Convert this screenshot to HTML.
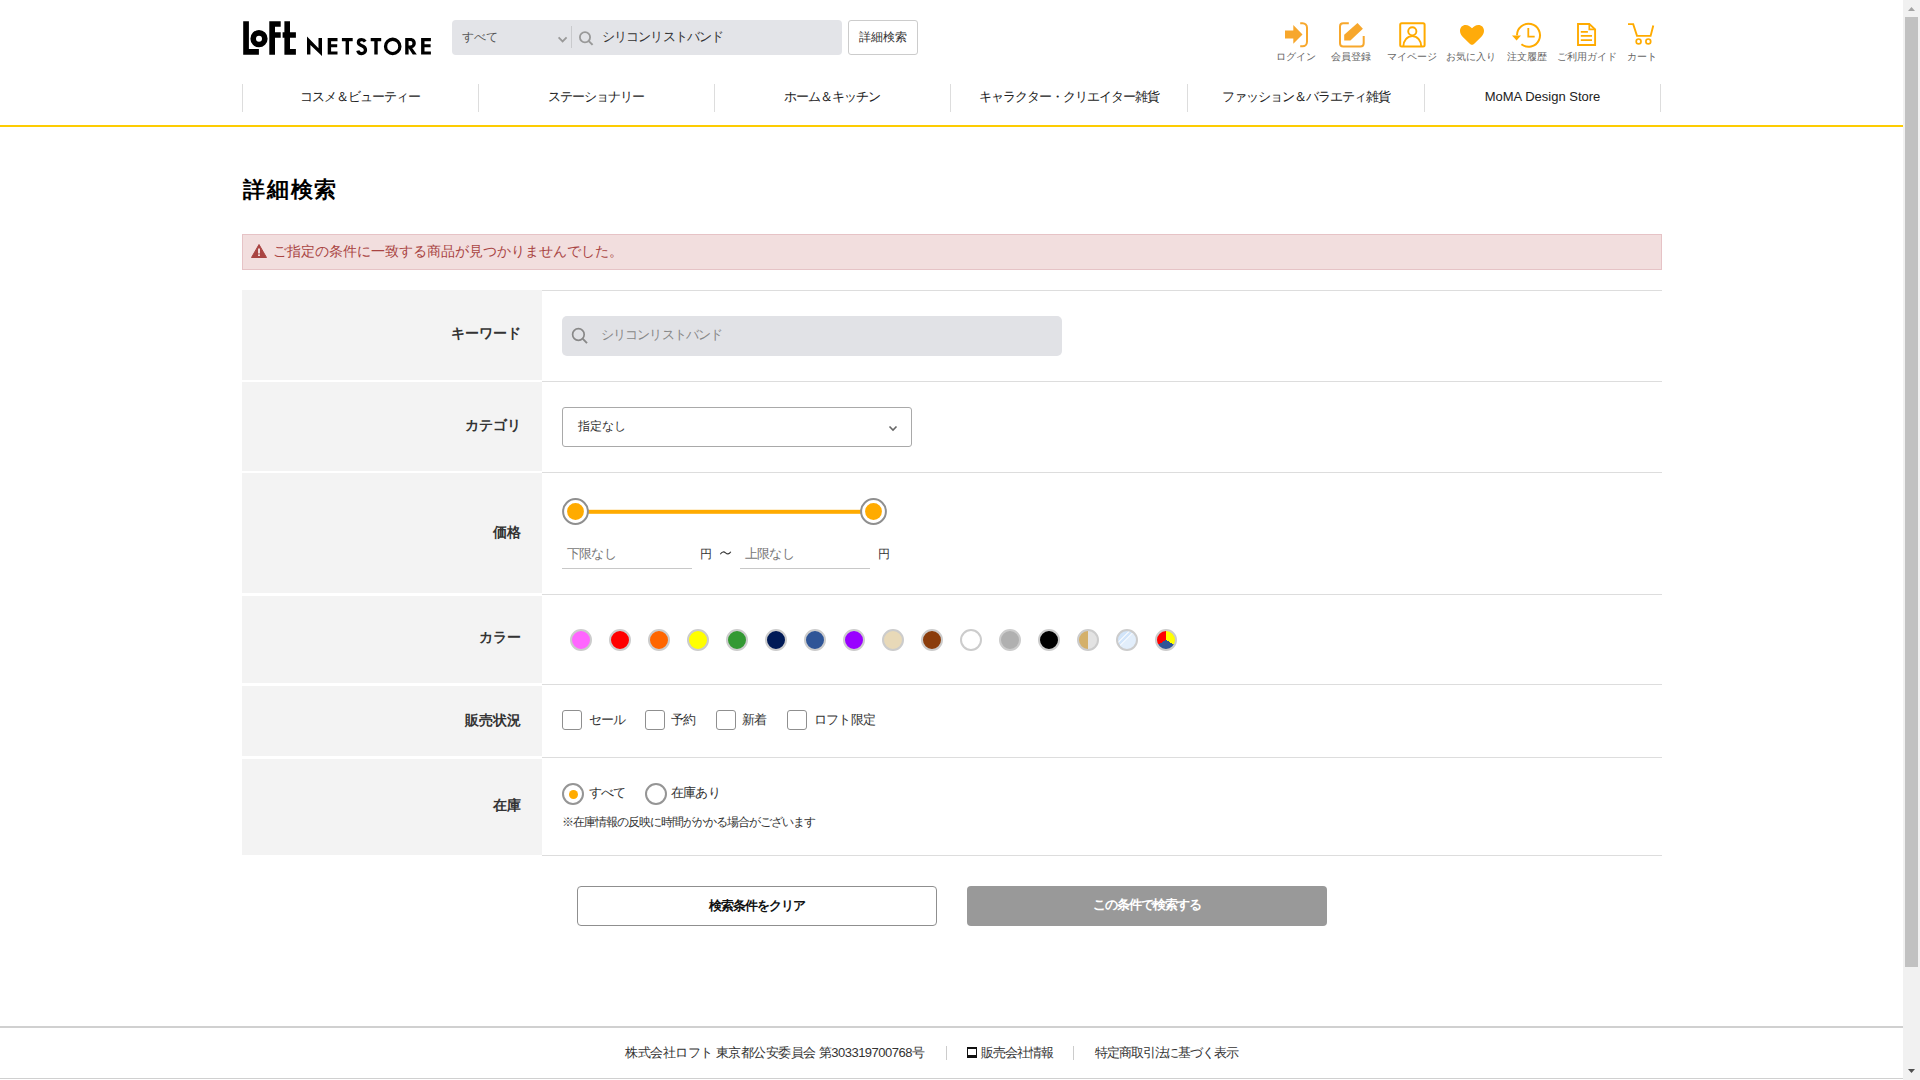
<!DOCTYPE html>
<html lang="ja">
<head>
<meta charset="utf-8">
<title>詳細検索 | ロフト公式通販サイト</title>
<style>
*{box-sizing:border-box;margin:0;padding:0}
html,body{width:1920px;height:1080px;overflow:hidden;background:#fff}
body{font-family:"Liberation Sans",sans-serif;color:#333;position:relative}
.a{position:absolute;white-space:nowrap}
.t{line-height:1}
/* scrollbar */
#sb{position:absolute;left:1903px;top:0;width:17px;height:1080px;background:#f1f1f1}
#sb .th{position:absolute;left:2px;top:17px;width:13px;height:950px;background:#c1c1c1}
/* header */
.sbox{left:452px;top:20px;width:390px;height:35px;background:#e3e4e8;border-radius:4px}
.dbtn{left:848px;top:20px;width:70px;height:35px;border:1px solid #ccc;border-radius:3px;background:#fff;font-size:12px;color:#333;text-align:center;line-height:33px}
.hic{top:52px;font-size:10px;color:#666;line-height:10px}
.nav{top:84px;height:28px;border-left:1px solid #ddd}
.navt{top:90px;font-size:13px;color:#222;line-height:14px;text-align:center;letter-spacing:-1px}
#yl{left:0;top:125px;width:1903px;height:2px;background:#fdcc02}

.lab{left:242px;width:300px;background:#f3f3f3}
.rline{left:542px;width:1120px;height:1px;background:#ddd}
.lt{right:1399px;font-size:14px;font-weight:bold;color:#333;line-height:16px}
.sw{width:22px;height:22px;border-radius:50%;border:2px solid #ccc;top:629px}
.cb{width:20px;height:20px;border:1px solid #8f8f8f;border-radius:3px;top:710px;background:#fff}
.cbt{top:713px;font-size:13px;color:#333;line-height:14px;letter-spacing:-0.8px}
.rd{width:22px;height:22px;border:2px solid #959595;border-radius:50%;top:783px;background:#fff}
.btn{top:886px;width:360px;height:40px;border-radius:4px;font-size:13px;font-weight:bold;text-align:center;line-height:38px;letter-spacing:-1px}
.ft{top:1046px;font-size:13px;color:#333;line-height:14px}
</style>
</head>
<body>
<div id="sb"><div class="th"></div>
<svg class="a" style="left:0;top:0" width="17" height="1080"><path d="M8.5 7 L12 11 L5 11Z" fill="#a3a3a3"/><path d="M5 1069 L12 1069 L8.5 1073Z" fill="#505050"/></svg>
</div>

<!-- logo -->
<svg class="a" style="left:0;top:0" width="440" height="70">
<g fill="#000">
<path d="M243.2 21.2h5.7v27.9h10v5.6h-15.7z"/>
<path fill-rule="evenodd" d="M259 30.1a8.6 8.6 0 1 1 0 17.2a8.6 8.6 0 1 1 0-17.2zM259 35.7a3 3 0 1 0 0 6a3 3 0 1 0 0-6z"/>
<path d="M269.3 21.2h11.4v5.5h-5.7v5.6h5.7v5.5h-5.7v16.9h-5.7z"/>
<path d="M284.4 21.2h5.6v11.1h5.9v5.5h-5.9v11.3h5.9v5.6h-11.5v-16.9h-1.8v-5.5h1.8z"/>
<path d="M307 36.4L318.5 48.2V38.1H322V56L310.4 45.1V54.6H307Z"/>
<path d="M327.7 38.1H337.5V41.2H331.1V44.3H337.2V47.2H331.1V51.5H337.5V54.6H327.7Z"/>
<path d="M341.9 38.1H352.7V41.2H349V54.6H345.6V41.2H341.9Z"/>
<path d="M370.7 38.1H381.2V41.2H377.7V54.6H374.3V41.2H370.7Z"/>
<path d="M421.1 38.1H430.9V41.2H424.5V44.3H430.6V47.2H424.5V51.5H430.9V54.6H421.1Z"/>
<path d="M405.2 38.1H410.5C413.8 38.1 415.8 40.2 415.8 43.2C415.8 45.6 414.4 47.4 412.2 48L416.8 54.6H412.8L408.6 48.3V54.6H405.2ZM408.6 41.1V45.6H410.2C411.7 45.6 412.4 44.6 412.4 43.3C412.4 42 411.7 41.1 410.2 41.1Z"/>
</g>
<g fill="none" stroke="#000" stroke-width="3.3">
<circle cx="392.7" cy="46.4" r="7.15"/>
<path d="M365.2 41.6C364.4 40.2 363.2 39.7 361.7 39.7C359.7 39.7 358.4 40.9 358.4 42.4C358.4 44.4 360.3 45.1 362 45.8C364.3 46.7 365.5 47.9 365.5 50C365.5 52.2 363.7 53.6 361.6 53.6C359.6 53.6 358.2 52.3 357.8 50.6"/>
</g>
</svg>

<!-- search -->
<div class="a sbox"></div>
<div class="a t" style="left:462px;top:30px;font-size:12px;color:#555;line-height:14px">すべて</div>
<svg class="a" style="left:0;top:0" width="930" height="70">
<path d="M558.6 37.4l4 4l4-4" fill="none" stroke="#999" stroke-width="1.8"/>
<rect x="571" y="26" width="1" height="22" fill="#c9cacd"/>
<circle cx="585" cy="37.3" r="5.1" fill="none" stroke="#999" stroke-width="1.8"/>
<path d="M588.8 41.1l3.8 3.8" stroke="#999" stroke-width="2"/>
</svg>
<div class="a t" style="left:602px;top:30px;font-size:13px;color:#333;line-height:14px;letter-spacing:-0.9px">シリコンリストバンド</div>
<div class="a dbtn">詳細検索</div>

<!-- header icons -->
<svg class="a" style="left:1270px;top:15px" width="400" height="36">
<g transform="translate(-1270,-15)">
<path d="M1285 30.5h8.3v-5.5l9.2 9.4l-9.2 9.4v-5.4h-8.3z" fill="#f7a72c"/>
<path d="M1300.2 23.2h2.3c2.6 0 4.5 1.9 4.5 4.5v14.1c0 2.6-1.9 4.5-4.5 4.5h-2.3" fill="none" stroke="#f7a72c" stroke-width="2"/>
<path d="M1348.8 23.2h-5.6c-2.2 0-3.2 1.2-3.2 3.2v16.8c0 2.2 1.2 3.2 3.2 3.2h17.3c2.2 0 3.2-1.2 3.2-3.2v-7.3" fill="none" stroke="#f7a72c" stroke-width="2"/>
<path d="M1344.2 40.6v-5.9l13.3-11.7l5.4 5.8l-12.5 11.8z" fill="#f7a72c"/>
<rect x="1400.2" y="23.2" width="24.4" height="23.4" rx="1.5" fill="none" stroke="#ffab00" stroke-width="2"/>
<circle cx="1412.3" cy="31.3" r="4.1" fill="none" stroke="#ffab00" stroke-width="1.9"/>
<path d="M1403.3 46.6c0-6.2 4-10.5 9-10.5s9 4.3 9 10.5" fill="none" stroke="#ffab00" stroke-width="1.9"/>
<path d="M1472 44.8C1471 44.8 1470.5 44.3 1469.5 43.4L1462.6 36.7C1460.8 34.9 1460 33 1460 30.8C1460 27.4 1462.5 25 1465.6 25C1468.4 25 1470 26.4 1472 28.3C1474 26.4 1475.6 25 1478.4 25C1481.5 25 1484 27.4 1484 30.8C1484 33 1483.2 34.9 1481.4 36.7L1474.5 43.4C1473.5 44.3 1473 44.8 1472 44.8Z" fill="#ffab0a"/>
<path d="M1517 35.2a11.5 11.5 0 1 1 4.4 9.1" fill="none" stroke="#ffab00" stroke-width="2"/>
<path d="M1512 35.5h9l-4.4 5z" fill="#ffab00"/>
<path d="M1528.3 28v8.6h6.4" fill="none" stroke="#ffab00" stroke-width="1.8"/>
<path d="M1578 24h11.3l5.8 5.3v15.7h-17.1z" fill="none" stroke="#ffab00" stroke-width="1.9"/>
<path d="M1589.3 24v5.3h5.8" fill="none" stroke="#ffab00" stroke-width="1.7"/>
<path d="M1580.8 31.8h7.1M1580.8 35.9h11.2M1580.8 40.1h11.2" stroke="#ffab00" stroke-width="1.7"/>
<path d="M1628 24.1h5.2l3.8 11.8h13.6l2.7-10.5" fill="none" stroke="#ffab00" stroke-width="1.9"/>
<circle cx="1638.6" cy="41.4" r="2.4" fill="none" stroke="#ffab00" stroke-width="1.7"/>
<circle cx="1648.3" cy="41.4" r="2.4" fill="none" stroke="#ffab00" stroke-width="1.7"/>
</g>
</svg>
<div class="a hic" style="left:1276px">ログイン</div>
<div class="a hic" style="left:1331px">会員登録</div>
<div class="a hic" style="left:1387px">マイページ</div>
<div class="a hic" style="left:1446px">お気に入り</div>
<div class="a hic" style="left:1507px">注文履歴</div>
<div class="a hic" style="left:1557px">ご利用ガイド</div>
<div class="a hic" style="left:1627px">カート</div>

<!-- nav -->
<div class="a nav" style="left:242px;width:236px"></div>
<div class="a nav" style="left:478px;width:236px"></div>
<div class="a nav" style="left:714px;width:236px"></div>
<div class="a nav" style="left:950px;width:237px"></div>
<div class="a nav" style="left:1187px;width:237px"></div>
<div class="a nav" style="left:1424px;width:236px;border-right:1px solid #ddd;width:237px"></div>
<div class="a navt" style="left:242px;width:236px">コスメ＆ビューティー</div>
<div class="a navt" style="left:478px;width:236px">ステーショナリー</div>
<div class="a navt" style="left:714px;width:236px">ホーム＆キッチン</div>
<div class="a navt" style="left:950px;width:237px">キャラクター・クリエイター雑貨</div>
<div class="a navt" style="left:1187px;width:237px">ファッション＆バラエティ雑貨</div>
<div class="a navt" style="left:1424px;width:237px;letter-spacing:0">MoMA Design Store</div>
<div class="a" id="yl"></div>

<!-- title -->
<div class="a t" style="left:243px;top:178px;font-size:22px;font-weight:bold;color:#000;line-height:24px;letter-spacing:1.8px">詳細検索</div>
<div class="a" style="left:242px;top:234px;width:1420px;height:36px;background:#f2dede;border:1px solid #e6c3c6"></div>
<svg class="a" style="left:251px;top:243px" width="17" height="16"><path d="M8 1.5L15.5 14.5H0.5Z" fill="#a94442" stroke="#a94442" stroke-width="1" stroke-linejoin="round"/><rect x="7.2" y="5.5" width="1.6" height="5" fill="#fff"/><rect x="7.2" y="11.4" width="1.6" height="1.6" fill="#fff"/></svg>
<div class="a t" style="left:273px;top:243px;font-size:14px;color:#a94442;line-height:16px">ご指定の条件に一致する商品が見つかりませんでした。</div>

<!-- table -->
<div class="a lab" style="top:290px;height:90px"></div>
<div class="a lab" style="top:382px;height:89px"></div>
<div class="a lab" style="top:473px;height:120px"></div>
<div class="a lab" style="top:596px;height:87px"></div>
<div class="a lab" style="top:686px;height:70px"></div>
<div class="a lab" style="top:759px;height:96px"></div>
<div class="a rline" style="top:290px"></div>
<div class="a rline" style="top:381px"></div>
<div class="a rline" style="top:472px"></div>
<div class="a rline" style="top:594px"></div>
<div class="a rline" style="top:684px"></div>
<div class="a rline" style="top:757px"></div>
<div class="a rline" style="top:855px"></div>

<div class="a lt" style="top:325px">キーワード</div>
<div class="a lt" style="top:417px">カテゴリ</div>
<div class="a lt" style="top:524px">価格</div>
<div class="a lt" style="top:629px">カラー</div>
<div class="a lt" style="top:712px">販売状況</div>
<div class="a lt" style="top:797px">在庫</div>

<!-- keyword -->
<div class="a" style="left:562px;top:316px;width:500px;height:40px;background:#e1e2e6;border-radius:5px"></div>
<svg class="a" style="left:565px;top:322px" width="30" height="30"><circle cx="13.4" cy="12.5" r="5.8" fill="none" stroke="#888" stroke-width="1.7"/><path d="M17.6 16.7l4.4 4.4" stroke="#888" stroke-width="1.9"/></svg>
<div class="a t" style="left:601px;top:328px;font-size:13px;color:#888;line-height:14px;letter-spacing:-0.9px">シリコンリストバンド</div>

<!-- category -->
<div class="a" style="left:562px;top:407px;width:350px;height:40px;background:#fff;border:1px solid #a9a9a9;border-radius:3px"></div>
<div class="a t" style="left:578px;top:420px;font-size:12px;color:#333;line-height:13px">指定なし</div>
<svg class="a" style="left:886px;top:421px" width="14" height="14"><path d="M3.5 5.5l3.5 3.5l3.5-3.5" fill="none" stroke="#666" stroke-width="1.6"/></svg>

<!-- price -->
<svg class="a" style="left:550px;top:490px" width="350" height="45">
<rect x="587" y="-490" width="0" height="0"/>
<rect x="37" y="19.8" width="287" height="4" fill="#ffab00"/>
<circle cx="25.5" cy="21.5" r="12.4" fill="#fff" stroke="#8f8f8f" stroke-width="2"/>
<circle cx="25.5" cy="21.5" r="8.4" fill="#ffab00"/>
<circle cx="323.5" cy="21.5" r="12.4" fill="#fff" stroke="#8f8f8f" stroke-width="2"/>
<circle cx="323.5" cy="21.5" r="8.4" fill="#ffab00"/>
</svg>
<div class="a t" style="left:567px;top:547px;font-size:13px;color:#777;line-height:14px;letter-spacing:-0.8px">下限なし</div>
<div class="a" style="left:562px;top:568px;width:130px;height:1px;background:#c8c8c8"></div>
<div class="a t" style="left:700px;top:547px;font-size:12px;color:#333;line-height:14px">円</div>
<svg class="a" style="left:715px;top:545px" width="20" height="15"><path d="M5.3 9.3C7.2 6.4 9 6.5 10.6 7.9C12.2 9.3 14 9.6 15.8 6.8" fill="none" stroke="#333" stroke-width="1.15"/></svg>
<div class="a t" style="left:745px;top:547px;font-size:13px;color:#777;line-height:14px;letter-spacing:-0.8px">上限なし</div>
<div class="a" style="left:740px;top:568px;width:130px;height:1px;background:#c8c8c8"></div>
<div class="a t" style="left:878px;top:547px;font-size:12px;color:#333;line-height:14px">円</div>

<!-- colors -->
<div class="a sw" style="left:570px;background:#ff66ff"></div>
<div class="a sw" style="left:609px;background:#ff0000"></div>
<div class="a sw" style="left:648px;background:#ff6600"></div>
<div class="a sw" style="left:687px;background:#ffff00"></div>
<div class="a sw" style="left:726px;background:#339933"></div>
<div class="a sw" style="left:765px;background:#001a57"></div>
<div class="a sw" style="left:804px;background:#2f5597"></div>
<div class="a sw" style="left:843px;background:#9900ff"></div>
<div class="a sw" style="left:882px;background:#e8d9b8"></div>
<div class="a sw" style="left:921px;background:#8b3d0c"></div>
<div class="a sw" style="left:960px;background:#fff"></div>
<div class="a sw" style="left:999px;background:#b0b0b0"></div>
<div class="a sw" style="left:1038px;background:#000"></div>
<div class="a sw" style="left:1077px;background:linear-gradient(90deg,#d4b06a 50%,#e3e3e3 50%)"></div>
<div class="a sw" style="left:1116px;background:linear-gradient(135deg,#d2e5fa 0,#d2e5fa 30%,#f0f6fd 30%,#f0f6fd 36%,#d2e5fa 36%,#d2e5fa 44%,#f0f6fd 44%,#f0f6fd 50%,#e2eefb 50%)"></div>
<div class="a sw" style="left:1155px;background:conic-gradient(#ffff00 0 120deg,#2f5597 120deg 240deg,#ff0000 240deg 360deg)"></div>

<!-- checkboxes -->
<div class="a cb" style="left:562px"></div><div class="a cbt" style="left:589px">セール</div>
<div class="a cb" style="left:645px"></div><div class="a cbt" style="left:671px">予約</div>
<div class="a cb" style="left:716px"></div><div class="a cbt" style="left:742px">新着</div>
<div class="a cb" style="left:787px"></div><div class="a cbt" style="left:814px">ロフト限定</div>

<!-- radios -->
<div class="a rd" style="left:562px"><div style="position:absolute;left:4.8px;top:4.8px;width:9.6px;height:9.6px;border-radius:50%;background:#ffab00"></div></div>
<div class="a cbt" style="left:589px;top:786px">すべて</div>
<div class="a rd" style="left:645px"></div>
<div class="a cbt" style="left:671px;top:786px">在庫あり</div>
<div class="a t" style="left:562px;top:815px;font-size:12px;color:#333;line-height:14px;letter-spacing:-1px">※在庫情報の反映に時間がかかる場合がございます</div>

<!-- buttons -->
<div class="a btn" style="left:577px;border:1px solid #8f8f8f;background:#fff;color:#111">検索条件をクリア</div>
<div class="a btn" style="left:967px;background:#999;color:#fff">この条件で検索する</div>

<!-- footer -->
<div class="a" style="left:0;top:1026px;width:1903px;height:2px;background:#d0d0d0"></div>
<div class="a" style="left:0;top:1078px;width:1903px;height:1px;background:#d0d0d0"></div>
<div class="a ft" style="left:625px;letter-spacing:-0.5px">株式会社ロフト 東京都公安委員会 第303319700768号</div>
<div class="a" style="left:946px;top:1046px;width:1px;height:14px;background:#ccc"></div>
<div class="a" style="left:967px;top:1047px;width:10px;height:11px;border:1.5px solid #111;border-top-width:2px;border-bottom-width:3px"></div>
<div class="a ft" style="left:981px;letter-spacing:-1px">販売会社情報</div>
<div class="a" style="left:1073px;top:1046px;width:1px;height:14px;background:#ccc"></div>
<div class="a ft" style="left:1095px;letter-spacing:-1.1px">特定商取引法に基づく表示</div>
</body>
</html>
